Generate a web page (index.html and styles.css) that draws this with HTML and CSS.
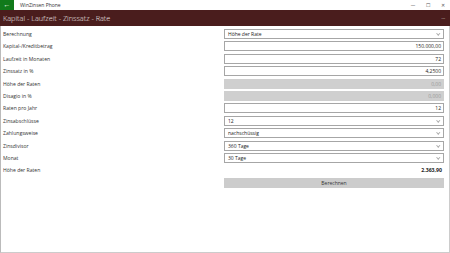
FILE: index.html
```html
<!DOCTYPE html>
<html>
<head>
<meta name="viewport" content="width=device-width, initial-scale=1">
<link rel="stylesheet" href="styles.css">
</head>
<body>

<div class="titlebar">
  <span class="back">&#8592;</span>
  <span class="apptitle">WinZinsen Phone</span>
  <span class="controls">
    <span class="ctl">&#8212;</span>
    <span class="ctl">&#9744;</span>
    <span class="ctl">&#10005;</span>
  </span>
</div>

<div class="header">
  <h1>Kapital - Laufzeit - Zinssatz - Rate</h1>
  <span class="more">&middot;&middot;&middot;</span>
</div>

<div class="form">
  <div class="label">Berechnung</div>
  <div class="box select">Höhe der Rate<span class="chev"></span></div>

  <div class="label">Kapital-/Kreditbetrag</div>
  <div class="box num">150.000,00</div>

  <div class="label">Laufzeit in Monaten</div>
  <div class="box num">72</div>

  <div class="label">Zinssatz in %</div>
  <div class="box num">4,2500</div>

  <div class="label">Höhe der Raten</div>
  <div class="box num off">0,00</div>

  <div class="label">Disagio in %</div>
  <div class="box num off">0,000</div>

  <div class="label">Raten pro Jahr</div>
  <div class="box num">12</div>

  <div class="label">Zinsabschlüsse</div>
  <div class="box select">12<span class="chev"></span></div>

  <div class="label">Zahlungsweise</div>
  <div class="box select">nachschüssig<span class="chev"></span></div>

  <div class="label">Zinsdivisor</div>
  <div class="box select">360 Tage<span class="chev"></span></div>

  <div class="label">Monat</div>
  <div class="box select">30 Tage<span class="chev"></span></div>

  <div class="label">Höhe der Raten</div>
  <div class="result">2.363,90</div>

  <div></div>
  <button class="calc">Berechnen</button>
</div>

</body>
</html>
```

FILE: styles.css
```css
* {
  box-sizing: border-box;
}

body {
  margin: 0;
  width: 450px;
  height: 253px;
  overflow: hidden;
  background: #fff;
  font-family: "Open Sans", "Noto Sans", sans-serif;
  color: #222;
}

/* window title bar */
.titlebar {
  display: flex;
  align-items: center;
  height: 10px;
  background: #fff;
}

.back {
  width: 14px;
  height: 10px;
  background: #117a1a;
  color: #fff;
  font-size: 7px;
  line-height: 10px;
  text-align: center;
}

.apptitle {
  margin-left: 6px;
  font-size: 5px;
  color: #333;
}

.controls {
  margin-left: auto;
  display: flex;
  gap: 9px;
  padding-right: 4px;
}

.ctl {
  width: 6px;
  font-size: 4.5px;
  color: #555;
  text-align: center;
}

/* page header */
.header {
  display: flex;
  align-items: center;
  height: 16px;
  padding: 0 5px 0 3px;
  background: #4a1d1d;
  color: #fff;
}

.header h1 {
  margin: 0;
  font-size: 7.3px;
  font-weight: 300;
  color: #f2eaea;
}

.more {
  margin-left: auto;
  font-size: 6px;
  letter-spacing: -0.3px;
  color: #ddd;
}

/* form rows */
.form {
  display: grid;
  grid-template-columns: 1fr 220px;
  grid-auto-rows: 10px;
  row-gap: 2.4px;
  align-items: center;
  height: 227px;
  padding: 3px 5px 0 1px;
  border-left: 1px solid #bbb;
  border-right: 1px solid #ccc;
  border-bottom: 1px solid #ccc;
}

.label {
  padding-left: 1px;
  font-size: 5.1px;
  color: #333;
}

.box {
  position: relative;
  height: 10px;
  border: 1px solid #a6a6a6;
  padding: 0 3px;
  font-size: 5px;
  line-height: 8px;
  background: #fff;
}

.num {
  text-align: right;
  padding-right: 2px;
}

.off {
  border-color: #cfcfcf;
  background: #cfcfcf;
  color: #999;
}

.chev {
  position: absolute;
  right: 4px;
  top: 2px;
  width: 2.5px;
  height: 2.5px;
  border-right: 0.6px solid #aaa;
  border-bottom: 0.6px solid #aaa;
  transform: rotate(45deg);
}

.result {
  text-align: right;
  padding-right: 2px;
  font-size: 5.2px;
  font-weight: bold;
}

.calc {
  height: 10px;
  margin: 0;
  padding: 0;
  border: none;
  background: #cccccc;
  font-family: inherit;
  font-size: 5px;
  color: #333;
}
```
